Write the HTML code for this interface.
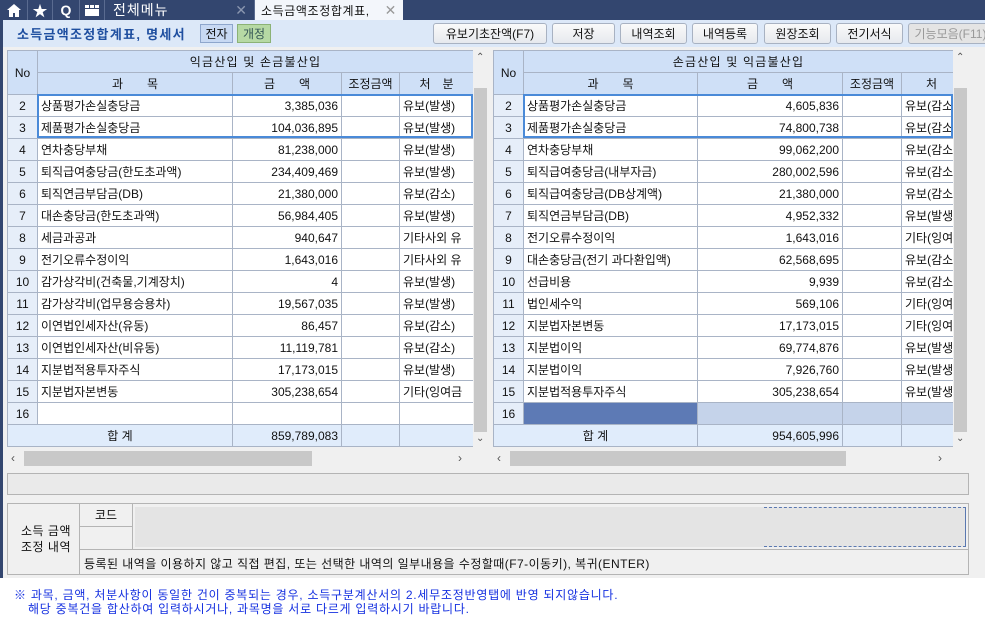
<!DOCTYPE html>
<html><head><meta charset="utf-8"><style>
*{box-sizing:border-box;margin:0;padding:0}
body{width:985px;height:621px;overflow:hidden;position:relative;background:#fff;font-family:"Liberation Sans","Noto Sans CJK KR",sans-serif;font-size:12px;color:#111}
.a{position:absolute}
.top{left:0;top:0;width:985px;height:20px;background:#33466f}
.tab{top:0;height:20px;border-right:1px solid #5a6b90;color:#fff;display:flex;align-items:center;justify-content:center}
.panel{left:0;top:20px;width:985px;height:558px;background:#dce8f8;border-left:3px solid #33466f}
.btn{top:23px;height:21px;border:1px solid #a8b2c2;border-radius:3px;background:linear-gradient(#fafafa,#e6e9ee);display:flex;align-items:center;justify-content:center;font-size:12px}
.gray{left:3px;top:47px;width:982px;height:531px;background:#f0f0f0}
table{border-collapse:collapse;table-layout:fixed;position:absolute;background:#fff}
td{border:1px solid #a9b4c6;height:22px;white-space:nowrap;overflow:hidden;padding:0 3px;font-size:12px}
.h td{background:#cfe0f7;text-align:center}
.h td.g{letter-spacing:1.2px}
td.no{background:#e6eef9;text-align:center}
td.r{text-align:right}
.tot td{background:#e0ecfb}
.vs{background:#f0f0f0}
.thumb{background:#c8c8c8}
.note{color:#1530e0;font-size:12px;letter-spacing:0.75px}
</style></head><body>
<div class="a top"></div>
<div class="a tab" style="left:0;width:28px"><svg width="14" height="13" viewBox="0 0 14 13"><path d="M7 0L0 6h2v7h4V9h2v4h4V6h2z" fill="#fff"/></svg></div>
<div class="a tab" style="left:28px;width:25px;font-size:15px">★</div>
<div class="a tab" style="left:53px;width:27px;font-weight:bold;font-size:14px">Q</div>
<div class="a tab" style="left:80px;width:25px"><svg width="14" height="11"><rect x="0" y="0" width="14" height="11" fill="#fff"/><rect x="0" y="3" width="14" height="1" fill="#33466f"/><rect x="4" y="0" width="1" height="3" fill="#33466f"/><rect x="9" y="0" width="1" height="3" fill="#33466f"/></svg></div>
<div class="a tab" style="left:105px;width:150px;justify-content:flex-start;padding-left:8px;font-size:14px;letter-spacing:1px">전체메뉴<span style="position:absolute;right:6px;color:#8b97b0;font-size:14px">✕</span></div>
<div class="a" style="left:255px;top:0;width:148px;height:20px;background:#f3f6fb;display:flex;align-items:center;padding-left:6px;font-size:12px;letter-spacing:0.6px">소득금액조정합계표,<span style="position:absolute;right:6px;color:#999;font-size:14px">✕</span></div>
<div class="a panel"></div>
<div class="a" style="left:17px;top:24px;color:#1f4fa0;font-weight:bold;font-size:13px;letter-spacing:1.3px">소득금액조정합계표, 명세서</div>
<div class="a" style="left:200px;top:24px;width:33px;height:19px;background:#c8d9f3;border:1px solid #8ea6cc;display:flex;align-items:center;justify-content:center">전자</div>
<div class="a" style="left:237px;top:24px;width:34px;height:19px;background:#b6d9a4;border:1px solid #8bb276;display:flex;align-items:center;justify-content:center;color:#355">개정</div>
<div class="a btn" style="left:433px;width:114px">유보기초잔액(F7)</div>
<div class="a btn" style="left:552px;width:63px">저장</div>
<div class="a btn" style="left:620px;width:67px">내역조회</div>
<div class="a btn" style="left:692px;width:66px">내역등록</div>
<div class="a btn" style="left:764px;width:67px">원장조회</div>
<div class="a btn" style="left:836px;width:67px">전기서식</div>
<div class="a btn" style="left:908px;width:85px;color:#999;background:#e4e4e4">기능모음(F11)</div>
<div class="a gray"></div>

<table style="left:7px;top:50px;width:466px">
<colgroup><col style="width:30px"><col style="width:195px"><col style="width:109px"><col style="width:58px"><col style="width:74px"></colgroup>
<tr class="h"><td rowspan="2">No</td><td colspan="4" class="g">익금산입 및 손금불산입</td></tr>
<tr class="h"><td>과　　목</td><td>금　　액</td><td>조정금액</td><td>처　분</td></tr>
<tr><td class="no">2</td><td>상품평가손실충당금</td><td class="r">3,385,036</td><td></td><td>유보(발생)</td></tr>
<tr><td class="no">3</td><td>제품평가손실충당금</td><td class="r">104,036,895</td><td></td><td>유보(발생)</td></tr>
<tr><td class="no">4</td><td>연차충당부채</td><td class="r">81,238,000</td><td></td><td>유보(발생)</td></tr>
<tr><td class="no">5</td><td>퇴직급여충당금(한도초과액)</td><td class="r">234,409,469</td><td></td><td>유보(발생)</td></tr>
<tr><td class="no">6</td><td>퇴직연금부담금(DB)</td><td class="r">21,380,000</td><td></td><td>유보(감소)</td></tr>
<tr><td class="no">7</td><td>대손충당금(한도초과액)</td><td class="r">56,984,405</td><td></td><td>유보(발생)</td></tr>
<tr><td class="no">8</td><td>세금과공과</td><td class="r">940,647</td><td></td><td>기타사외 유</td></tr>
<tr><td class="no">9</td><td>전기오류수정이익</td><td class="r">1,643,016</td><td></td><td>기타사외 유</td></tr>
<tr><td class="no">10</td><td>감가상각비(건축물,기계장치)</td><td class="r">4</td><td></td><td>유보(발생)</td></tr>
<tr><td class="no">11</td><td>감가상각비(업무용승용차)</td><td class="r">19,567,035</td><td></td><td>유보(발생)</td></tr>
<tr><td class="no">12</td><td>이연법인세자산(유동)</td><td class="r">86,457</td><td></td><td>유보(감소)</td></tr>
<tr><td class="no">13</td><td>이연법인세자산(비유동)</td><td class="r">11,119,781</td><td></td><td>유보(감소)</td></tr>
<tr><td class="no">14</td><td>지분법적용투자주식</td><td class="r">17,173,015</td><td></td><td>유보(발생)</td></tr>
<tr><td class="no">15</td><td>지분법자본변동</td><td class="r">305,238,654</td><td></td><td>기타(잉여금</td></tr>
<tr><td class="no">16</td><td></td><td></td><td></td><td></td></tr>
<tr class="tot"><td colspan="2" style="text-align:center">합 계</td><td class="r">859,789,083</td><td></td><td></td></tr>
</table>
<div class="a" style="left:37px;top:94px;width:436px;height:44px;border:2px solid #4a8ad8"></div>
<div class="a vs" style="left:473px;top:50px;width:15px;height:400px"></div>
<div class="a thumb" style="left:474px;top:88px;width:13px;height:344px"></div>
<div class="a" style="left:476px;top:52px;font-size:10px;color:#555">⌃</div>
<div class="a" style="left:476px;top:433px;font-size:10px;color:#555">⌄</div>
<div class="a vs" style="left:7px;top:450px;width:466px;height:17px"></div>
<div class="a thumb" style="left:24px;top:451px;width:288px;height:15px"></div>
<div class="a" style="left:11px;top:451px;color:#555">‹</div>
<div class="a" style="left:458px;top:451px;color:#555">›</div>

<table style="left:493px;top:50px;width:460px">
<colgroup><col style="width:30px"><col style="width:174px"><col style="width:145px"><col style="width:59px"><col style="width:52px"></colgroup>
<tr class="h"><td rowspan="2">No</td><td colspan="4" class="g">손금산입 및 익금불산입</td></tr>
<tr class="h"><td>과　　목</td><td>금　　액</td><td>조정금액</td><td style="text-align:left;padding-left:24px">처</td></tr>
<tr><td class="no">2</td><td>상품평가손실충당금</td><td class="r">4,605,836</td><td></td><td>유보(감소</td></tr>
<tr><td class="no">3</td><td>제품평가손실충당금</td><td class="r">74,800,738</td><td></td><td>유보(감소</td></tr>
<tr><td class="no">4</td><td>연차충당부채</td><td class="r">99,062,200</td><td></td><td>유보(감소</td></tr>
<tr><td class="no">5</td><td>퇴직급여충당금(내부자금)</td><td class="r">280,002,596</td><td></td><td>유보(감소</td></tr>
<tr><td class="no">6</td><td>퇴직급여충당금(DB상계액)</td><td class="r">21,380,000</td><td></td><td>유보(감소</td></tr>
<tr><td class="no">7</td><td>퇴직연금부담금(DB)</td><td class="r">4,952,332</td><td></td><td>유보(발생</td></tr>
<tr><td class="no">8</td><td>전기오류수정이익</td><td class="r">1,643,016</td><td></td><td>기타(잉여</td></tr>
<tr><td class="no">9</td><td>대손충당금(전기 과다환입액)</td><td class="r">62,568,695</td><td></td><td>유보(감소</td></tr>
<tr><td class="no">10</td><td>선급비용</td><td class="r">9,939</td><td></td><td>유보(감소</td></tr>
<tr><td class="no">11</td><td>법인세수익</td><td class="r">569,106</td><td></td><td>기타(잉여</td></tr>
<tr><td class="no">12</td><td>지분법자본변동</td><td class="r">17,173,015</td><td></td><td>기타(잉여</td></tr>
<tr><td class="no">13</td><td>지분법이익</td><td class="r">69,774,876</td><td></td><td>유보(발생</td></tr>
<tr><td class="no">14</td><td>지분법이익</td><td class="r">7,926,760</td><td></td><td>유보(발생</td></tr>
<tr><td class="no">15</td><td>지분법적용투자주식</td><td class="r">305,238,654</td><td></td><td>유보(발생</td></tr>
<tr><td class="no">16</td><td style="background:#5d7ab5"></td><td style="background:#c5d3ea"></td><td style="background:#c5d3ea"></td><td style="background:#c5d3ea"></td></tr>
<tr class="tot"><td colspan="2" style="text-align:center">합 계</td><td class="r">954,605,996</td><td></td><td></td></tr>
</table>
<div class="a" style="left:523px;top:94px;width:430px;height:44px;border:2px solid #4a8ad8"></div>
<div class="a vs" style="left:953px;top:50px;width:15px;height:400px"></div>
<div class="a thumb" style="left:954px;top:88px;width:13px;height:344px"></div>
<div class="a" style="left:956px;top:52px;font-size:10px;color:#555">⌃</div>
<div class="a" style="left:956px;top:433px;font-size:10px;color:#555">⌄</div>
<div class="a vs" style="left:493px;top:450px;width:460px;height:17px"></div>
<div class="a thumb" style="left:510px;top:451px;width:336px;height:15px"></div>
<div class="a" style="left:497px;top:451px;color:#555">‹</div>
<div class="a" style="left:938px;top:451px;color:#555">›</div>

<div class="a" style="left:7px;top:473px;width:962px;height:22px;border:1px solid #b4b4b4;background:#eaeaea"></div>
<div class="a" style="left:7px;top:503px;width:962px;height:72px;border:1px solid #b4b4b4;background:#f0f0f0"></div>
<div class="a" style="left:79px;top:503px;width:1px;height:72px;background:#b4b4b4"></div>
<div class="a" style="left:16px;top:523px;width:60px;text-align:center;line-height:16px;letter-spacing:0.5px">소득 금액<br>조정 내역</div>
<div class="a" style="left:80px;top:506px;width:52px;text-align:center">코드</div>
<div class="a" style="left:80px;top:526px;width:53px;height:1px;background:#b4b4b4"></div>
<div class="a" style="left:132px;top:503px;width:1px;height:46px;background:#b4b4b4"></div>
<div class="a" style="left:135px;top:507px;width:831px;height:40px;background:#e4e4e4"></div>
<div class="a" style="left:764px;top:507px;width:202px;height:40px;border-top:1px dashed #5a78b0;border-bottom:1px dashed #5a78b0;border-right:1px solid #5a78b0"></div>
<div class="a" style="left:80px;top:549px;width:889px;height:1px;background:#b4b4b4"></div>
<div class="a" style="left:84px;top:555px;letter-spacing:0.45px">등록된 내역을 이용하지 않고 직접 편집, 또는 선택한 내역의 일부내용을 수정할때(F7-이동키), 복귀(ENTER)</div>

<div class="a" style="left:3px;top:578px;width:982px;height:43px;background:#fff"></div>
<div class="a note" style="left:14px;top:586px">※ 과목, 금액, 처분사항이 동일한 건이 중복되는 경우, 소득구분계산서의 2.세무조정반영탭에 반영 되지않습니다.</div>
<div class="a note" style="left:28px;top:600px">해당 중복건을 합산하여 입력하시거나, 과목명을 서로 다르게 입력하시기 바랍니다.</div>
</body></html>
